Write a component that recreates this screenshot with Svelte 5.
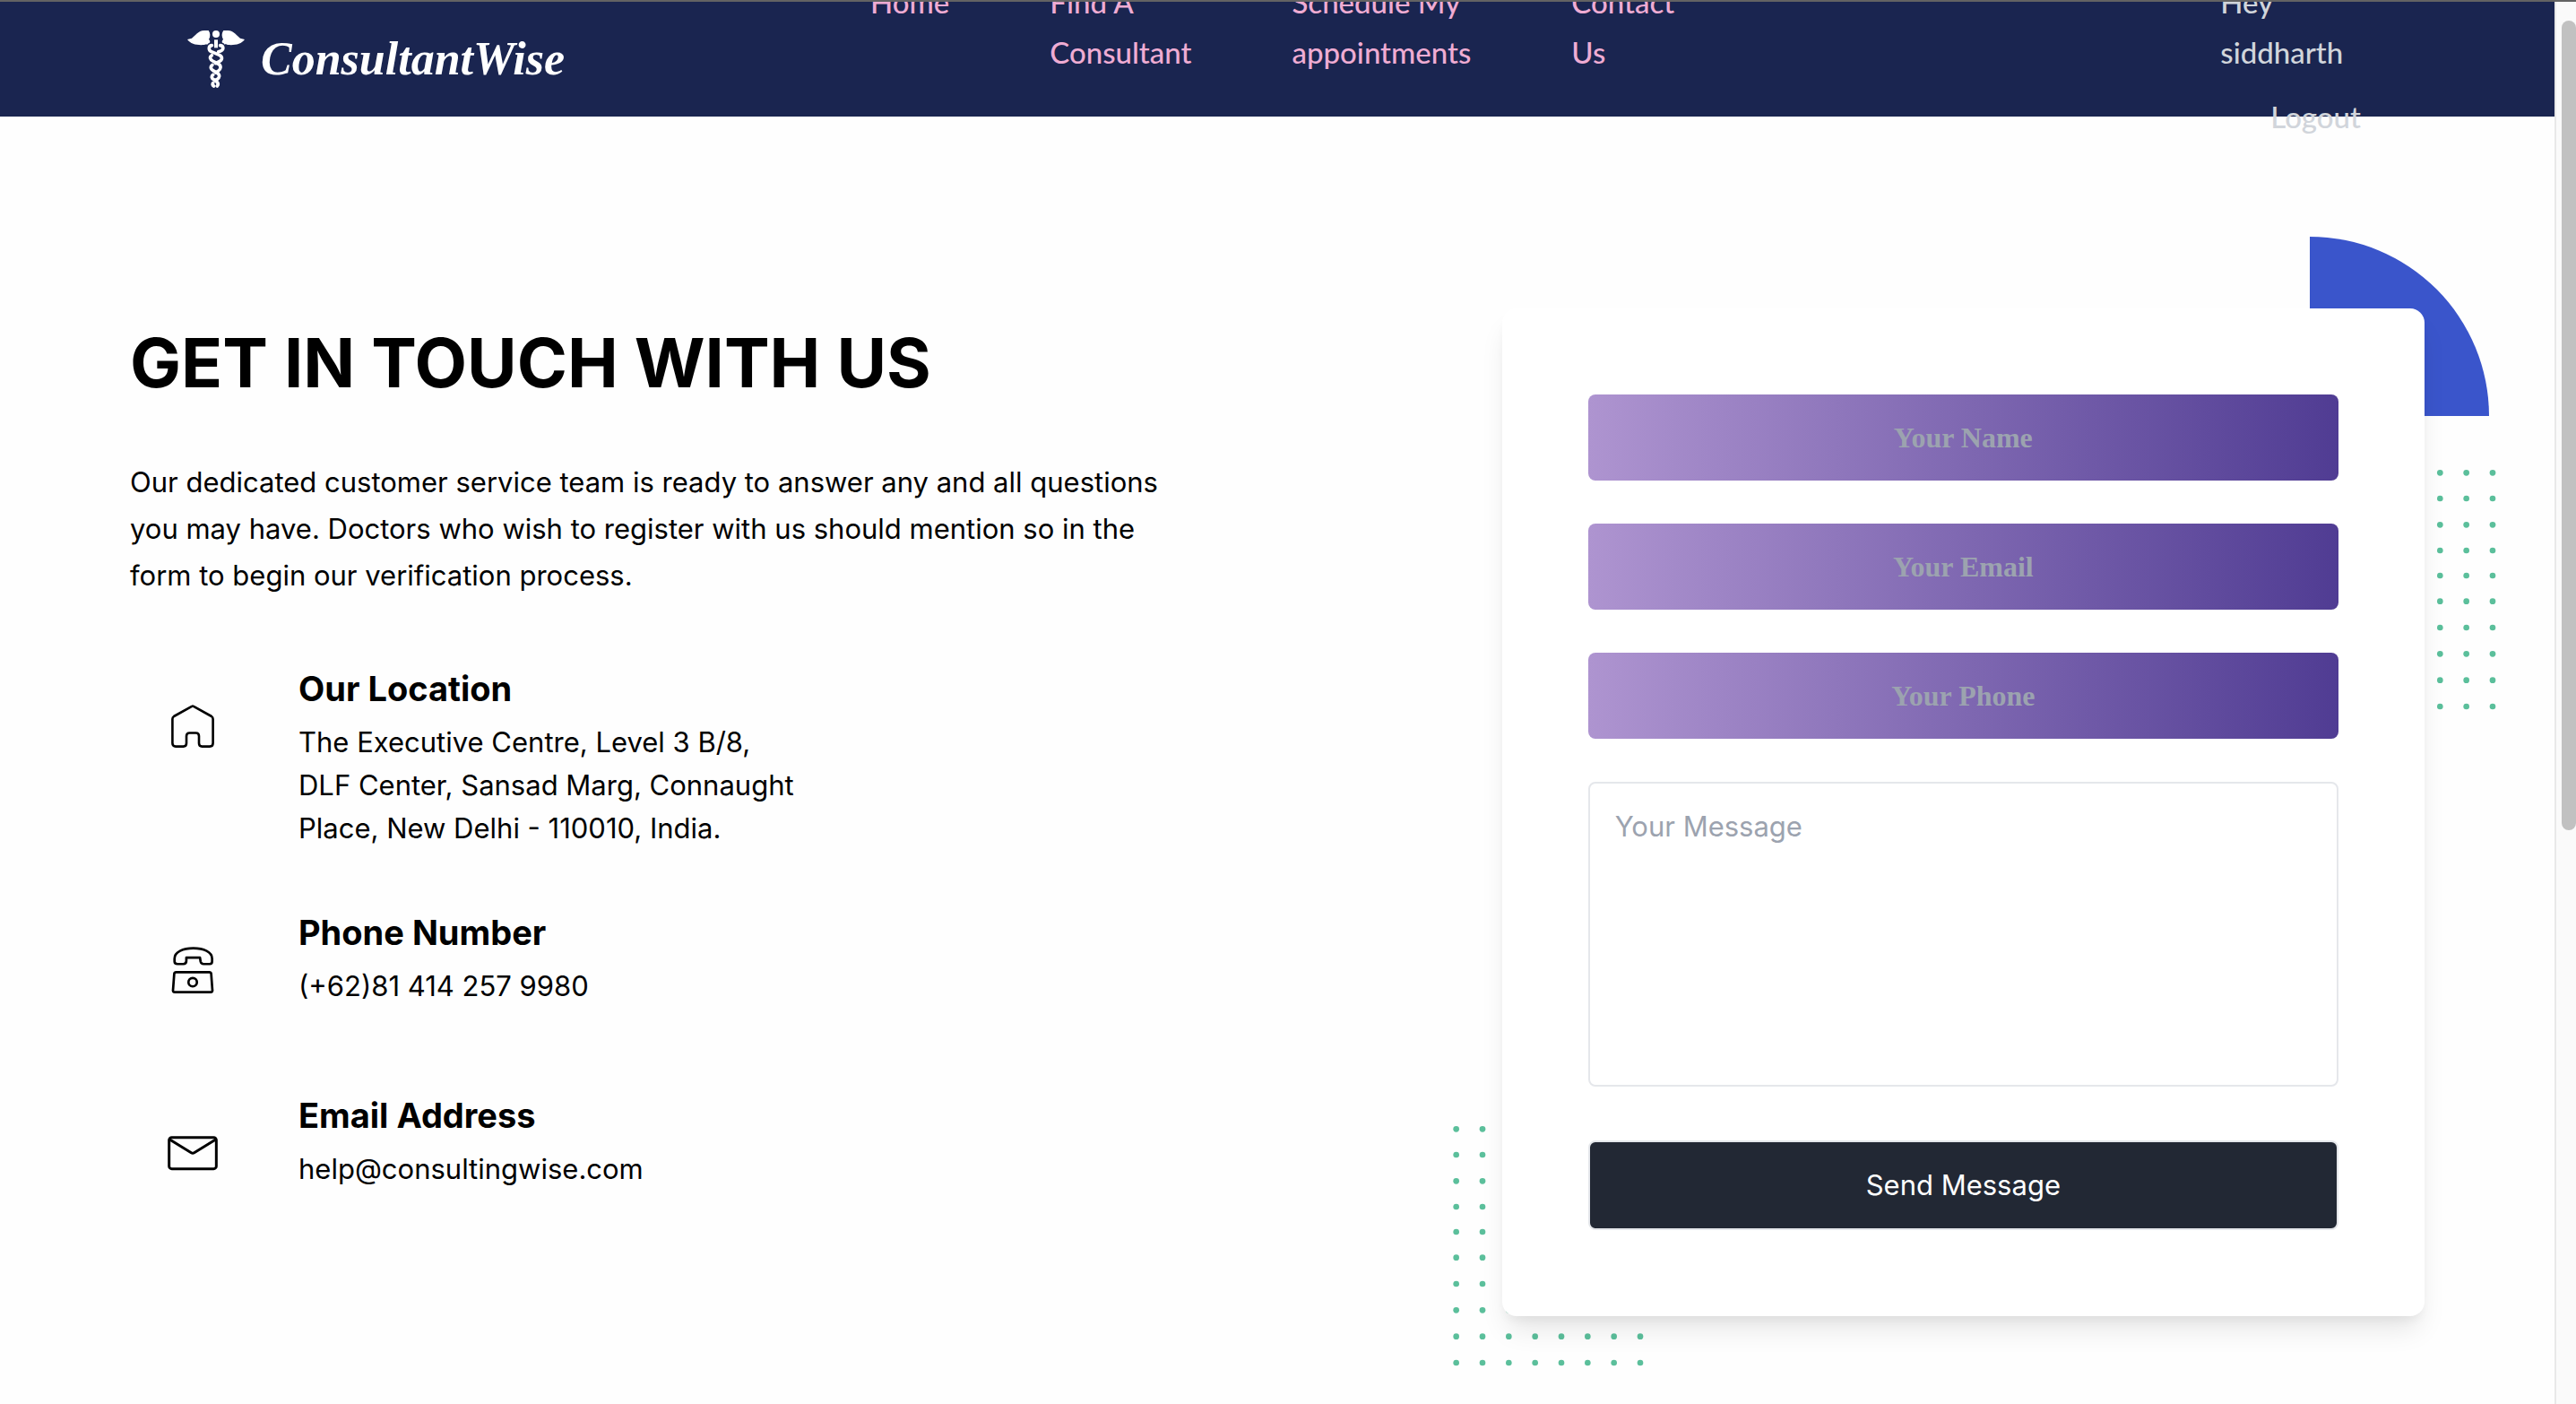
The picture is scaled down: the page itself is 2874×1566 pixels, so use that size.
<script>
  const links = [
    { href: '#home', lines: ['Home'] },
    { href: '#find', lines: ['Find A', 'Consultant'] },
    { href: '#schedule', lines: ['Schedule My', 'appointments'] },
    { href: '#contact', lines: ['Contact', 'Us'] }
  ];

  const fields = [
    { id: 'name', type: 'text', label: 'Your Name' },
    { id: 'email', type: 'email', label: 'Your Email' },
    { id: 'phone', type: 'tel', label: 'Your Phone' }
  ];

  const step = 44 / 3;
  const columns = Array.from({ length: 8 }, (_, i) => 105 - i * step);
  const rows = [1.667, 16, 30.667, 45, 59, 73.333, 88, 102.667, 117.333, 132];
</script>

{#snippet dots()}
  <svg viewBox="0 0 107 134" aria-hidden="true">
    {#each rows as cy}
      {#each columns as cx}
        <circle {cx} {cy} r="1.667" />
      {/each}
    {/each}
  </svg>
{/snippet}

<div class="window-edge"></div>
<div class="shell">
  <div class="page">
    <header>
      <a class="brand" href="#home">
        <svg viewBox="27 24 192 192" aria-hidden="true">
          <g fill="#fff">
            <path d="M27 54L42 50C53 43 62 24 84 24H98C104 33 105 44 99 54C105 60 104 66 97 67C97 73 88 69 84 72C60 74 38 70 27 54Z" />
            <path d="M219 54L204 50C193 43 184 24 162 24H148C142 33 141 44 147 54C141 60 142 66 149 67C149 73 158 69 162 72C186 74 208 70 219 54Z" />
            <circle cx="123" cy="36" r="12" />
            <path d="M117 55H129V82H117Z" />
          </g>
          <g fill="none" stroke="#fff" stroke-width="11" stroke-linecap="round">
            <path d="M109 74C97 76 97 91 108 95L134 106C146 112 144 122 135 127L122 134" />
            <path d="M137 74C150 76 149 89 138 93L131 95" />
            <path d="M109 107C100 113 103 121 112 126L131 136C142 142 139 154 130 160L122 165" />
            <path d="M111 139C102 146 106 154 113 158L128 167C137 173 135 182 127 187L120 191" />
            <path d="M113 172C106 178 109 185 115 188L125 195C131 200 130 206 127 210" />
            <path d="M113 200C110 204 112 208 116 210" />
          </g>
        </svg>
        <span>ConsultantWise</span>
      </a>
      <nav>
        {#each links as link}
          <a href={link.href}>
            {#each link.lines as line}<span>{line}</span>{/each}
          </a>
        {/each}
      </nav>
      <div class="account">
        <span>Hey<br />siddharth</span>
        <button type="button">Logout</button>
      </div>
    </header>

    <main>
      <section class="info">
        <h1>GET IN TOUCH WITH US</h1>
        <p class="lead">
          Our dedicated customer service team is ready to answer any and all questions<br />
          you may have. Doctors who wish to register with us should mention so in the<br />
          form to begin our verification process.
        </p>

        <article>
          <div class="icon">
            <svg width="48" height="48" viewBox="0 0 48 48" fill="none" stroke="#000" stroke-width="2.6" stroke-linejoin="round" aria-hidden="true">
              <path d="M25 1.8L45 13Q46.6 14 46.6 16V43Q46.6 46.6 43 46.6H34.5Q31 46.6 31 43V35Q31 31.5 27.5 31.5H20.5Q17 31.5 17 35V43Q17 46.6 13.5 46.6H5Q1.4 46.6 1.4 43V16Q1.4 14 3 13L23 1.8Q24 1.2 25 1.8Z" />
            </svg>
          </div>
          <div>
            <h2>Our Location</h2>
            <p>The Executive Centre, Level 3 B/8,<br />DLF Center, Sansad Marg, Connaught<br />Place, New Delhi - 110010, India.</p>
          </div>
        </article>

        <article>
          <div class="icon">
            <svg width="48" height="54" viewBox="33 47 142 158" fill="none" stroke="#000" stroke-width="8" stroke-linejoin="round" aria-hidden="true">
              <path d="M44 98V88C44 66 72 54 106 54C140 54 168 66 168 88V98Q168 106 160 106H140Q132 106 130 98L128 85H83V96Q83 106 73 106H54Q44 106 44 98Z" />
              <path d="M49 133H159Q164 133 165 138L169 192Q170 199 163 199H45Q38 199 39 192L43 138Q44 133 49 133Z" />
              <circle cx="104" cy="166" r="14" />
            </svg>
          </div>
          <div>
            <h2>Phone Number</h2>
            <p>(+62)81 414 257 9980</p>
          </div>
        </article>

        <article>
          <div class="icon">
            <svg width="56" height="40" viewBox="21 679 168 118" fill="none" stroke="#000" stroke-width="9" stroke-linejoin="round" aria-hidden="true">
              <rect x="26" y="686" width="158" height="105" rx="9" />
              <path d="M28 693L100 737Q105 740 110 737L182 693" />
            </svg>
          </div>
          <div>
            <h2>Email Address</h2>
            <p>help@consultingwise.com</p>
          </div>
        </article>
      </section>

      <section class="form-column">
        <div class="card">
          <span class="quarter"></span>
          <span class="dots dots-right">{@render dots()}</span>
          <span class="dots dots-left">{@render dots()}</span>
          <form onsubmit={(e) => e.preventDefault()}>
            {#each fields as field}
              <input id={field.id} type={field.type} placeholder={field.label} aria-label={field.label} />
            {/each}
            <textarea id="message" placeholder="Your Message" aria-label="Your Message"></textarea>
            <button type="submit">Send Message</button>
          </form>
        </div>
      </section>
    </main>
  </div>

  <div class="scroll-track"><div class="scroll-thumb"></div></div>
</div>

<style>
  :global(body) {
    margin: 0;
    background: #fefefe;
  }

  .window-edge {
    position: fixed;
    top: 0;
    left: 0;
    right: 0;
    height: 2px;
    background: #636363;
    z-index: 10;
  }

  .shell {
    display: flex;
    min-height: 100vh;
    overflow: hidden;
    color: #000;
    font-family: Inter, 'Liberation Sans', sans-serif;
    font-size: 31px;
    line-height: 48px;
  }

  .shell *,
  .shell {
    box-sizing: border-box;
  }

  .page {
    flex: 1;
    min-width: 0;
  }

  header {
    display: flex;
    align-items: flex-start;
    height: 130px;
    padding: 0 216px 0 209px;
    background: #1a2550;
    font-family: 'Gill Sans', Lato, sans-serif;
    font-size: 33px;
    font-weight: 500;
    line-height: 56px;
  }

  header a {
    text-decoration: none;
  }

  .brand {
    display: flex;
    align-items: center;
    gap: 18px;
    width: 762px;
    height: 132px;
    color: #fff;
    font-family: 'Lucida Calligraphy', 'Liberation Serif', serif;
    font-size: 52px;
    font-style: italic;
    font-weight: 700;
  }

  .brand svg {
    width: 64px;
    height: 64px;
  }

  nav {
    display: flex;
    gap: 112px;
    margin: -26px auto 0 0;
  }

  nav a {
    display: flex;
    flex-direction: column;
    color: #efacd3;
  }

  .account {
    display: flex;
    flex-direction: column;
    gap: 16px;
    margin-top: -26px;
    color: #d1d5db;
  }

  .account button {
    padding: 0 0 0 56px;
    border: 0;
    background: none;
    color: inherit;
    font: inherit;
  }

  main {
    display: flex;
    justify-content: space-between;
    padding: 214px 113px 98px;
  }

  .info {
    width: 50%;
    padding: 0 32px;
  }

  h1,
  h2,
  p {
    margin: 0;
  }

  h1 {
    margin-bottom: 48px;
    font-size: 76px;
    line-height: 120px;
    white-space: nowrap;
  }

  .lead {
    margin-bottom: 72px;
    line-height: 52px;
    white-space: nowrap;
  }

  article {
    display: flex;
    gap: 48px;
    margin-bottom: 64px;
  }

  .icon {
    display: flex;
    align-items: center;
    justify-content: center;
    width: 140px;
    height: 140px;
  }

  h2 {
    margin-bottom: 8px;
    font-size: 38px;
    line-height: 56px;
  }

  .form-column {
    width: 41.6667%;
    padding: 0 32px;
  }

  .card {
    position: relative;
    z-index: 0;
    padding: 96px;
  }

  /* White surface sits between the decorations and the form */
  .card::before {
    content: '';
    position: absolute;
    inset: 0;
    z-index: -1;
    border-radius: 16px;
    background: #fff;
    box-shadow:
      0 20px 30px -6px rgba(0, 0, 0, 0.1),
      0 8px 12px -4px rgba(0, 0, 0, 0.05);
  }

  .quarter,
  .dots {
    position: absolute;
    z-index: -2;
  }

  .quarter {
    top: -80px;
    right: -72px;
    width: 200px;
    height: 200px;
    border-top-right-radius: 100%;
    background: #3a55cb;
  }

  .dots {
    width: 214px;
    height: 268px;
  }

  .dots svg {
    display: block;
    width: 100%;
    fill: #5bbf9b;
  }

  .dots-right {
    top: 180px;
    right: -80px;
  }

  .dots-left {
    bottom: -56px;
    left: -56px;
  }

  form {
    display: flex;
    flex-direction: column;
    gap: 48px;
  }

  input {
    width: 100%;
    height: 96px;
    padding: 0 28px;
    border: 0;
    border-radius: 8px;
    background: linear-gradient(90deg, #ae94d0, #503c93);
    color: #fff;
    font: 700 32px/48px 'Liberation Serif', serif;
    text-align: center;
  }

  input::placeholder,
  textarea::placeholder {
    color: #9ca3af;
    opacity: 1;
  }

  textarea {
    display: block;
    width: 100%;
    height: 340px;
    margin-bottom: 12px;
    padding: 24px 28px;
    border: 2px solid #e5e7eb;
    border-radius: 8px;
    background: transparent;
    font: inherit;
    resize: none;
  }

  form button {
    height: 100px;
    border: 2px solid #e5e7eb;
    border-radius: 8px;
    background: #222834;
    color: #fff;
    font: inherit;
  }

  .scroll-track {
    width: 24px;
    padding: 23px 0 0 6px;
    border-left: 2px solid #e8e8e8;
    background: #fafafa;
  }

  .scroll-thumb {
    height: 58.5%;
    border-radius: 8px;
    background: #c1c1c1;
  }
</style>
